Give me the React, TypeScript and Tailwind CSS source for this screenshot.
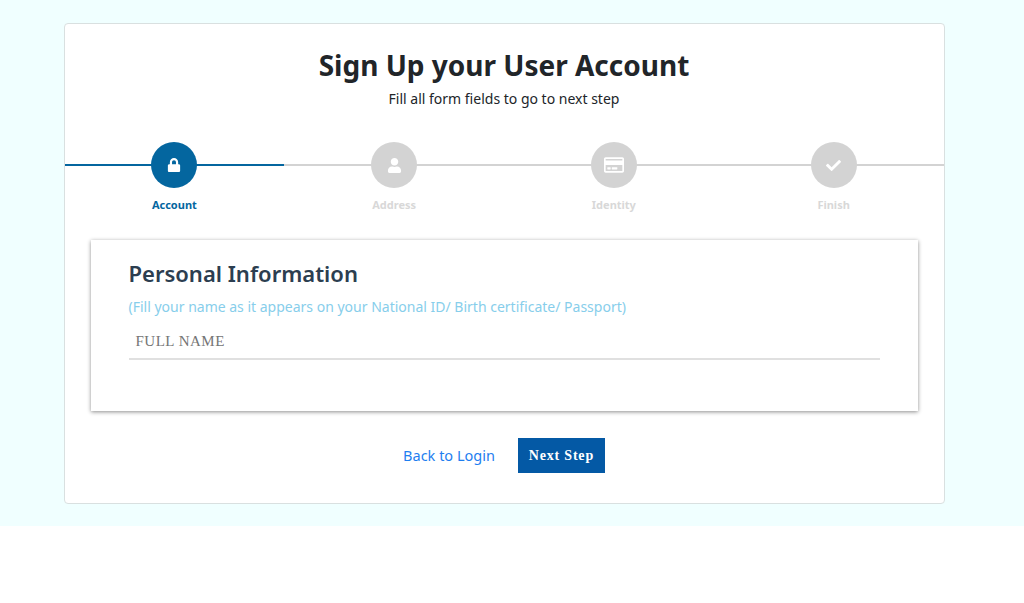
import { FaLock, FaUser, FaRegCreditCard, FaCheck } from "react-icons/fa";

const steps = [
  { label: "Account", Icon: FaLock, active: true, size: 14 },
  { label: "Address", Icon: FaUser, active: false, size: 15 },
  { label: "Identity", Icon: FaRegCreditCard, active: false, size: 20 },
  { label: "Finish", Icon: FaCheck, active: false, size: 15 },
];

export default function App() {
  return (
    <div className="bg-white min-h-[603px] font-['Noto_Sans','Open_Sans',sans-serif] text-[#212529]">
      <div className="bg-[#f0ffff] h-[526px] pt-[23px]">
        <div className="mx-auto ml-[63.5px] w-[881px] h-[481px] bg-white border border-[#d9e0e0] rounded-[4px] flex flex-col">
          <h1 className="text-[28px] leading-[36px] font-bold text-center mt-[23px] text-[#212529]">
            Sign Up your User Account
          </h1>
          <p className="text-[14px] leading-[20px] text-center mt-[6px]">
            Fill all form fields to go to next step
          </p>
          <div className="grid grid-cols-4 mt-[33px]">
            {steps.map(({ label, Icon, active, size }) => (
              <div key={label} className="relative flex flex-col items-center">
                <div className={`absolute left-0 right-0 top-[22px] h-[2px] ${active ? "bg-[#04669f]" : "bg-[#d3d3d3]"}`} />
                <div className={`relative w-[46px] h-[46px] rounded-full flex items-center justify-center text-white ${active ? "bg-[#04669f]" : "bg-[#d3d3d3]"}`}>
                  <Icon size={size} />
                </div>
                <div className={`mt-[9px] text-[11px] leading-[16px] font-bold ${active ? "text-[#04669f]" : "text-[#d8d8d8]"}`}>
                  {label}
                </div>
              </div>
            ))}
          </div>
          <div className="mx-[26px] mt-[27px] h-[171px] bg-white shadow-[0_1px_4px_rgba(0,0,0,0.45)] px-[38px] pt-[18px]">
            <h2 className="text-[22px] leading-[30px] font-semibold text-[#2c3e50]">Personal Information</h2>
            <p className="text-[14px] leading-[20px] mt-[9px] text-[#87ceeb]">
              (Fill your name as it appears on your National ID/ Birth certificate/ Passport)
            </p>
            <div className="mt-[7px] h-[36px] border-b-2 border-[#e0e0e0] px-[7px] flex items-center font-['Liberation_Serif',serif] text-[15px] tracking-[0.5px] text-[#757575]">
              FULL NAME
            </div>
          </div>
          <div className="flex items-center justify-center gap-[23px] mt-[27px]">
            <a className="text-[14.5px] text-[#1e7ef0]">Back to Login</a>
            <button className="w-[87px] h-[35px] bg-[#0459a5] text-white font-['Liberation_Serif',serif] font-bold text-[14px] tracking-[0.8px]">
              Next Step
            </button>
          </div>
        </div>
      </div>
    </div>
  );
}
